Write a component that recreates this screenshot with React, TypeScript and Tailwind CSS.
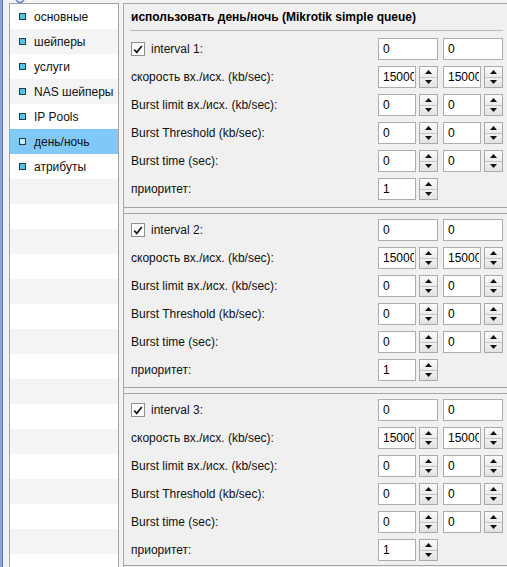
import React from "react";

const NAV_ITEMS = [
  "основные",
  "шейперы",
  "услуги",
  "NAS шейперы",
  "IP Pools",
  "день/ночь",
  "атрибуты",
];
const ACTIVE_NAV = 5;
const NAV_ROWS = 23;

function NavList() {
  const rows = Array.from({ length: NAV_ROWS }, (_, i) => NAV_ITEMS[i] ?? null);
  return (
    <div className="mt-[3px] ml-[6px] w-[110px] shrink-0 border border-[#a3a3a3] bg-white">
      {rows.map((label, i) => {
        const active = i === ACTIVE_NAV;
        const rowBg = active ? "bg-[#80c9f7]" : i % 2 === 1 ? "bg-[#f4f4f4]" : "bg-white";
        return (
          <div key={i} className={`flex h-[25px] items-center ${rowBg}`}>
            {label !== null ? (
              <>
                <span
                  className={`ml-[9px] h-[7px] w-[7px] border border-[#2b3a44] ${
                    active ? "bg-[#c9ecfb]" : "bg-[#4ec4e9]"
                  }`}
                />
                <span className="ml-[8px] whitespace-nowrap text-[12px] text-[#111]">{label}</span>
              </>
            ) : null}
          </div>
        );
      })}
    </div>
  );
}

function TextField({ value, width = "w-[60px]" }: { value: string; width?: string }) {
  return (
    <div
      className={`flex h-[22px] ${width} items-center border border-[#abadb3] bg-white pl-[4px] pr-[1px] text-[12px] text-black`}
    >
      <span className="block w-full overflow-hidden whitespace-nowrap">{value}</span>
    </div>
  );
}

function SpinButton() {
  return (
    <div className="flex h-[22px] w-[19px] flex-col border border-[#a9a9a9] bg-[#f3f3f3]">
      <div className="flex flex-1 items-center justify-center border-b border-[#c4c4c4] bg-gradient-to-b from-[#fbfbfb] to-[#ebebeb]">
        <svg width="7" height="4" viewBox="0 0 7 4">
          <path d="M3.5 0 L7 4 L0 4 Z" fill="#111" />
        </svg>
      </div>
      <div className="flex flex-1 items-center justify-center bg-gradient-to-b from-[#f0f0f0] to-[#e2e2e2]">
        <svg width="7" height="4" viewBox="0 0 7 4">
          <path d="M0 0 L7 0 L3.5 4 Z" fill="#111" />
        </svg>
      </div>
    </div>
  );
}

function Spinner({ value }: { value: string }) {
  return (
    <div className="flex w-[60px] gap-[3px]">
      <TextField value={value} width="w-[38px]" />
      <SpinButton />
    </div>
  );
}

function CheckBox() {
  return (
    <span className="flex h-[14px] w-[14px] items-center justify-center border border-[#8e8f8f] bg-white">
      <svg width="10" height="9" viewBox="0 0 10 9">
        <path d="M1.2 4.6 L3.8 7.4 L8.8 1" fill="none" stroke="#1c1c1c" strokeWidth="1.8" />
      </svg>
    </span>
  );
}

function Row({ label, children }: { label: React.ReactNode; children: React.ReactNode }) {
  return (
    <div className="flex h-[28px] items-center pl-[7px]">
      <div className="flex w-[247px] items-center text-[12px] text-[#111]">{label}</div>
      <div className="flex gap-[5px]">{children}</div>
    </div>
  );
}

function IntervalSection({ n, className }: { n: number; className: string }) {
  return (
    <div className={className}>
      <Row
        label={
          <span className="flex items-center gap-[6px]">
            <CheckBox />
            interval {n}:
          </span>
        }
      >
        <TextField value="0" />
        <TextField value="0" />
      </Row>
      <Row label="скорость вх./исх. (kb/sec):">
        <Spinner value="15000" />
        <Spinner value="15000" />
      </Row>
      <Row label="Burst limit вх./исх. (kb/sec):">
        <Spinner value="0" />
        <Spinner value="0" />
      </Row>
      <Row label="Burst Threshold (kb/sec):">
        <Spinner value="0" />
        <Spinner value="0" />
      </Row>
      <Row label="Burst time (sec):">
        <Spinner value="0" />
        <Spinner value="0" />
      </Row>
      <Row label="приоритет:">
        <Spinner value="1" />
      </Row>
    </div>
  );
}

export default function App() {
  return (
    <div
      className="relative flex h-[567px] w-[507px] overflow-hidden bg-[#f3f3f3]"
      style={{ fontFamily: '"Liberation Sans", Arial, sans-serif' }}
    >
      {/* window edge on the far left */}
      <div className="w-[3px] shrink-0 border-r border-[#5b79a6] bg-[#8aa9d4]" />
      <svg className="absolute left-[15px] top-0" width="10" height="4" viewBox="0 0 10 4">
        <path d="M1 0 Q5 5 9 0" fill="none" stroke="#5a86c4" strokeWidth="1.5" />
      </svg>

      <NavList />

      <div className="mt-[3px] ml-[4px] w-[386px] shrink-0 border-l border-t border-[#a8a8a8] bg-[#f0f0f0]">
        <div className="flex h-[26px] items-center pl-[7px] text-[12px] font-bold text-black">
          использовать день/ночь (Mikrotik simple queue)
        </div>
        <div className="mx-[6px] border-t border-[#b9b9b9]" />
        <IntervalSection n={1} className="border-b border-[#a5a5a5] pt-[4px] pb-[4px]" />
        <IntervalSection n={2} className="mt-[5px] border-y border-[#a5a5a5] pt-[2px] pb-[3px]" />
        <IntervalSection n={3} className="mt-[5px] border-y border-[#a5a5a5] pt-[2px] pb-[1px]" />
      </div>
    </div>
  );
}
